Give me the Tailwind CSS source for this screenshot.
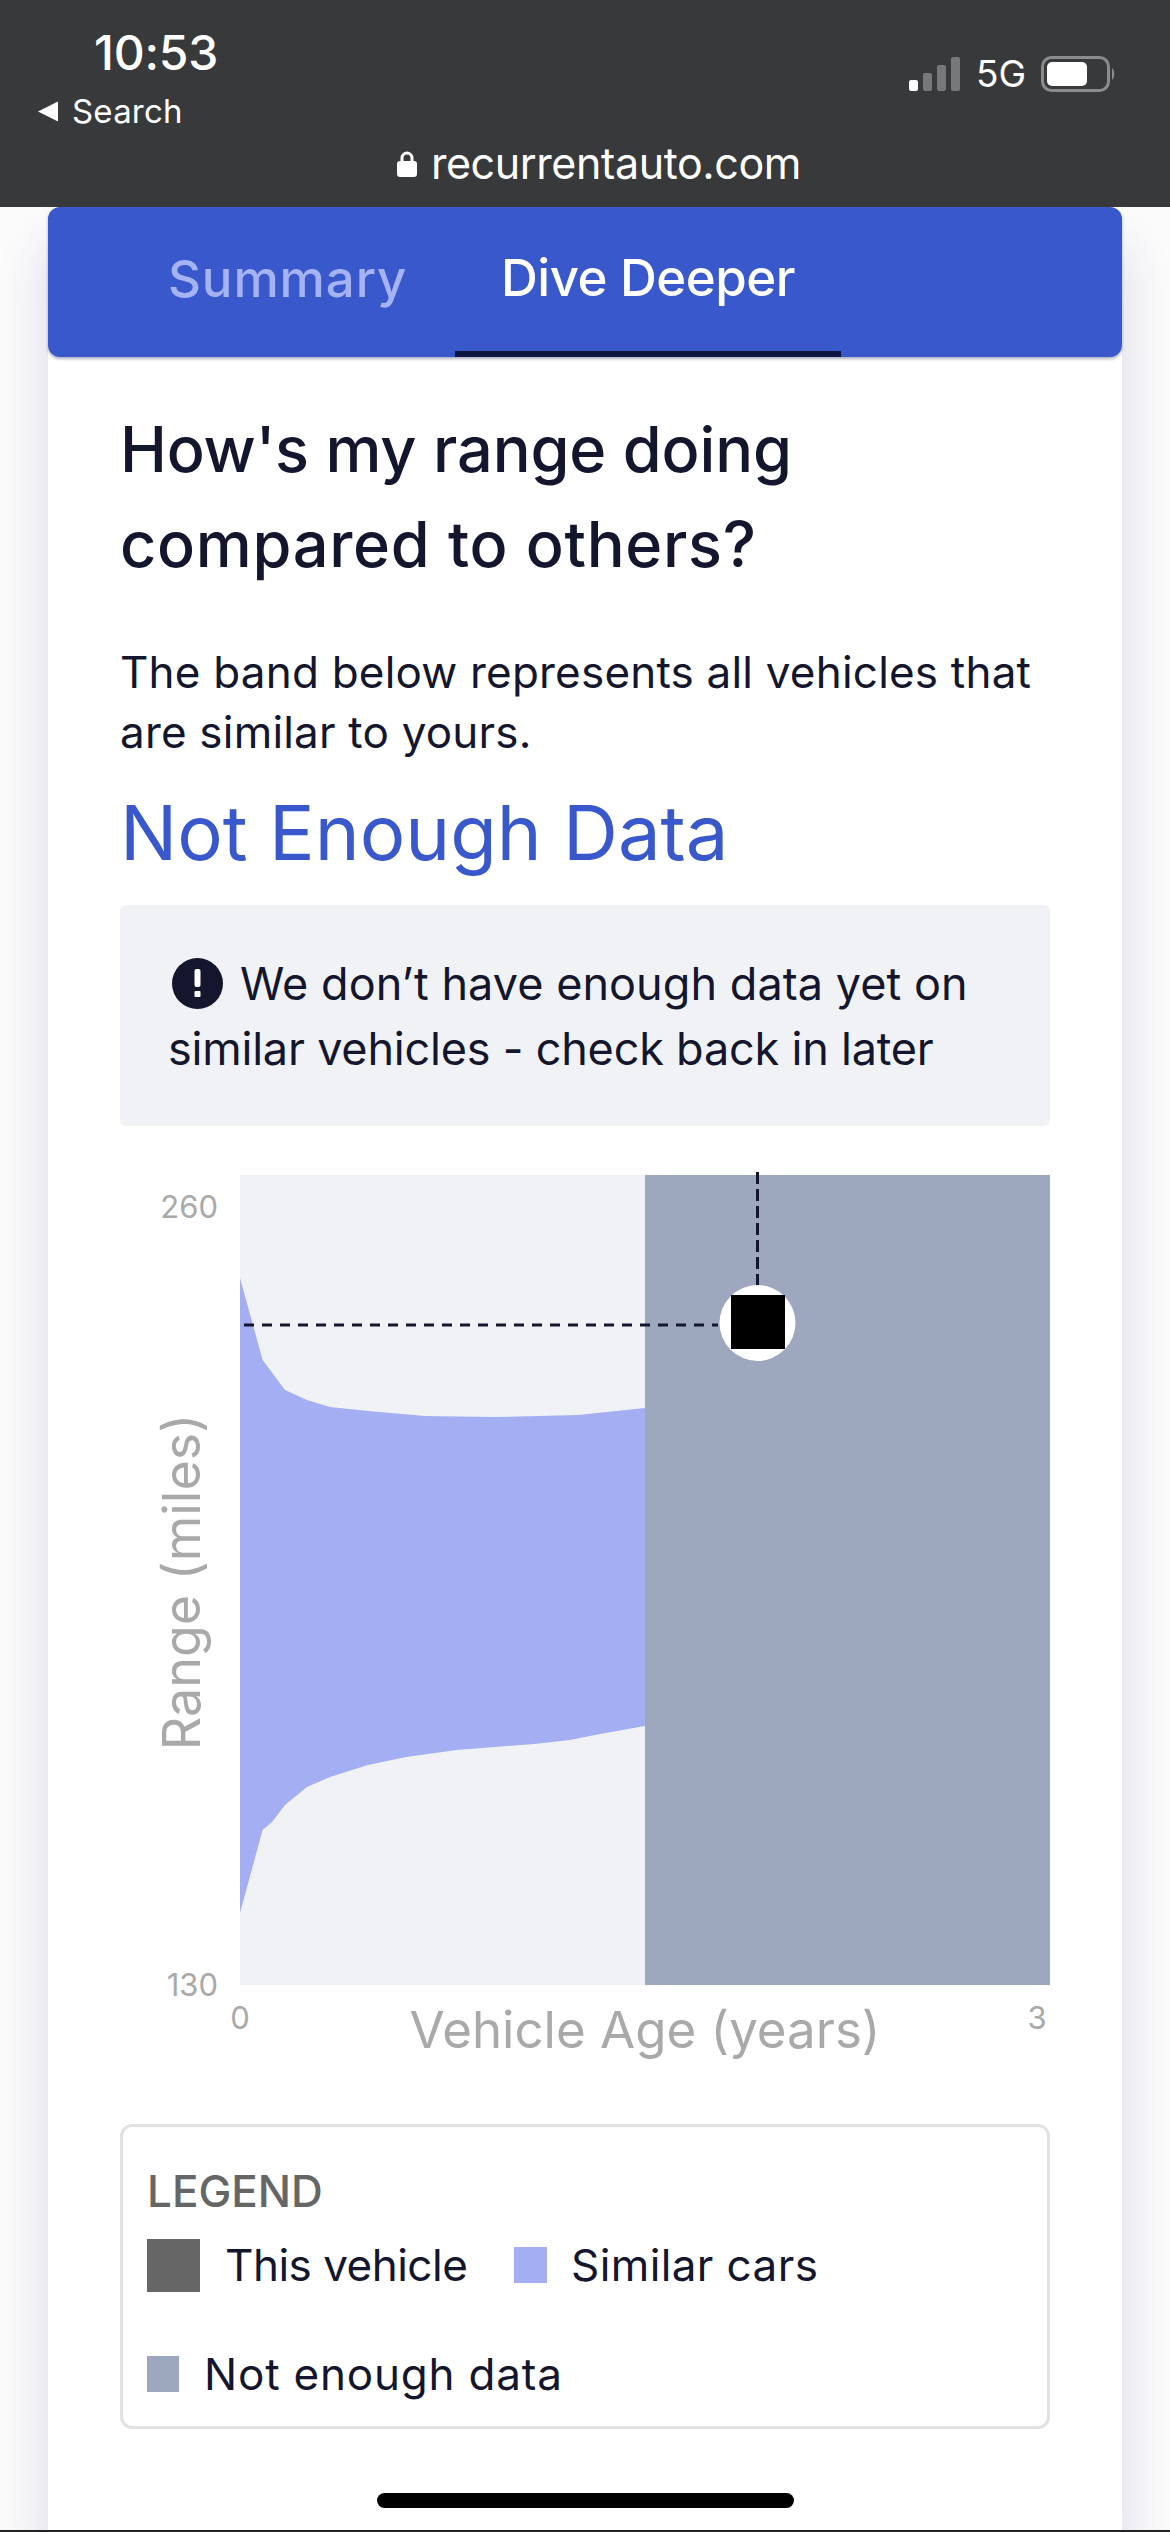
<!DOCTYPE html>
<html lang="en"><head><meta charset="utf-8"><script src="https://cdn.jsdelivr.net/npm/@tailwindcss/browser@4"></script><title>Recurrent</title></head>
<body class="font-['Inter',sans-serif] bg-white">
<div class="w-[1170px] h-[2532px] overflow-hidden flex flex-col bg-white border-b-2 border-[#222]">
  <header class="h-[207px] shrink-0 bg-[#38393b] text-white flex flex-col">
    <div class="flex justify-between h-[134px]">
      <div class="flex flex-col">
        <div class="pl-[94px] pt-[25px] text-[48px] leading-[56px] font-medium tracking-[-0.2px]">10:53</div>
        <div class="pl-[37px] pt-[10px] flex items-center gap-[12px]">
          <svg class="w-[23px] h-[23px]" viewBox="0 0 23 23"><path d="M21 1.5 V21.5 L1 11.5 Z" fill="#fff"/></svg>
          <span class="text-[33px] leading-[40px] tracking-[0.2px]">Search</span>
        </div>
      </div>
      <div class="flex items-center gap-[15px] pr-[55px] pt-[14px] h-[134px]">
        <svg class="w-[54px] h-[36px]" viewBox="0 0 54 36"><rect x="2" y="24" width="9" height="11" rx="2" fill="#fff"/><rect x="16" y="17" width="9" height="18" rx="2" fill="#77787a"/><rect x="30" y="9" width="9" height="26" rx="2" fill="#77787a"/><rect x="44" y="1" width="9" height="34" rx="2" fill="#77787a"/></svg>
        <span class="text-[37px] leading-[40px]">5G</span>
        <svg class="w-[74px] h-[36px]" viewBox="0 0 74 36"><rect x="1.5" y="1.5" width="66" height="33" rx="9" fill="none" stroke="#8b8c8e" stroke-width="3"/><rect x="6" y="6" width="40" height="24" rx="5" fill="#fff"/><path d="M71 12 C74 14 74 22 71 24 Z" fill="#8b8c8e"/></svg>
      </div>
    </div>
    <div class="flex items-center justify-center gap-[14px] h-[58px] pl-[28px]">
      <svg class="w-[20px] h-[27px]" viewBox="0 0 20 27"><path d="M5 12 V8 a5 5 0 0 1 10 0 V12" fill="none" stroke="#fff" stroke-width="3"/><rect x="0" y="11" width="20" height="16" rx="3" fill="#fff"/></svg>
      <span class="text-[43px] leading-[58px] tracking-[-0.4px]">recurrentauto.com</span>
    </div>
  </header>
  <main class="grow bg-[#fbfbfc] px-[48px] overflow-hidden">
    <div class="h-full bg-white rounded-t-[10px] shadow-[0_40px_50px_rgba(40,50,100,0.17)] text-[#14162e]">
      <nav class="h-[150px] bg-[#3858cc] rounded-[12px] flex pl-[72px] text-[51px] font-medium tracking-[-0.5px] shadow-[0_2px_3px_rgba(20,30,80,0.35)]">
        <div class="w-[335px] pl-[48px] flex items-center text-[#a5b2f3] pb-[6px] tracking-[0.9px]">Summary</div>
        <div class="w-[386px] flex items-center justify-center text-white border-b-[6px] border-[#0c1440] pb-[2px]">Dive Deeper</div>
      </nav>
      <section class="px-[72px]">
        <h1 class="pt-[45px] text-[63px] leading-[95px] font-medium"><span class="tracking-[-0.15px]">How's my range doing</span><br><span class="tracking-[0.7px]">compared to others?</span></h1>
        <p class="pt-[50px] text-[44px] leading-[60px] tracking-[0.2px]">The band below represents all vehicles that<br>are similar to yours.</p>
        <h2 class="pt-[22px] text-[76px] leading-[96px] text-[#3858cc]">Not Enough Data</h2>
        <div class="mt-[25px] h-[221px] rounded-[6px] bg-[#f1f2f6] pl-[48px] pt-[46px] text-[45px] leading-[65px] tracking-[-0.2px]">
          <div class="flex items-center gap-[17px] pl-[4px]">
            <svg class="w-[51px] h-[51px] shrink-0" viewBox="0 0 51 51"><circle cx="25.5" cy="25.5" r="25.5" fill="#14162e"/><rect x="22.5" y="11" width="6" height="18" rx="2" fill="#fff"/><rect x="22.5" y="33" width="6" height="6" rx="1" fill="#fff"/></svg>
            <span class="tracking-[0.05px]">We don’t have enough data yet on</span>
          </div>
          <div>similar vehicles - check back in later</div>
        </div>
        <svg class="block mt-[34px] w-[930px] h-[920px] font-['Inter',sans-serif]" viewBox="120 1160 930 920">
          <rect x="240" y="1175" width="405" height="810" fill="#f1f2f6"/>
          <polygon fill="#a4aff3" points="240,1278 262.6,1360 285,1390 307,1400 330,1407 368,1411 425,1416 495,1417 578,1415 645,1408 645,1726 600,1734 570,1740 534,1744 457,1750 406,1757 368,1765 330,1777 307,1787 285,1805 272,1822 262.6,1830 240,1913"/>
          <rect x="645" y="1175" width="405" height="810" fill="#9da7be"/>
          <path d="M244 1325 H718" stroke="#14162e" stroke-width="3" stroke-dasharray="10 8" fill="none"/>
          <path d="M757.5 1172 V1288" stroke="#14162e" stroke-width="3" stroke-dasharray="12 5" fill="none"/>
          <circle cx="757.5" cy="1323" r="38" fill="#fff"/>
          <rect x="731" y="1295" width="54" height="54" fill="#000"/>
          <g fill="#a9a9a9">
            <text x="218" y="1218" text-anchor="end" font-size="31">260</text>
            <text x="218" y="1996" text-anchor="end" font-size="31">130</text>
            <text x="240" y="2029" text-anchor="middle" font-size="31">0</text>
            <text x="1037" y="2029" text-anchor="middle" font-size="31">3</text>
            <text x="645" y="2048" text-anchor="middle" font-size="51">Vehicle Age (years)</text>
            <text transform="translate(200 1582) rotate(-90)" text-anchor="middle" font-size="52">Range (miles)</text>
          </g>
        </svg>
        <div class="mt-[44px] h-[305px] border-[3px] border-[#e2e2e4] rounded-[12px] pl-[24px] pt-[35px]">
          <div class="text-[44px] leading-[58px] text-[#666] font-medium">LEGEND</div>
          <div class="flex items-center h-[54px] mt-[18px] text-[44px]">
            <span class="w-[53px] h-[53px] bg-[#666]"></span><span class="ml-[25px] w-[264px] tracking-[-0.5px]">This vehicle</span>
            <span class="ml-[25px] w-[33px] h-[36px] bg-[#a4aff3]"></span><span class="ml-[24px] tracking-[0.4px]">Similar cars</span>
          </div>
          <div class="flex items-center h-[54px] mt-[55px] text-[44px]">
            <span class="w-[32px] h-[36px] bg-[#9da7be]"></span><span class="ml-[25px] tracking-[0.8px]">Not enough data</span>
          </div>
        </div>
        <div class="mt-[64px] ml-[257px] w-[417px] h-[15px] rounded-full bg-black"></div>
      </section>
    </div>
  </main>
</div>
</body></html>
